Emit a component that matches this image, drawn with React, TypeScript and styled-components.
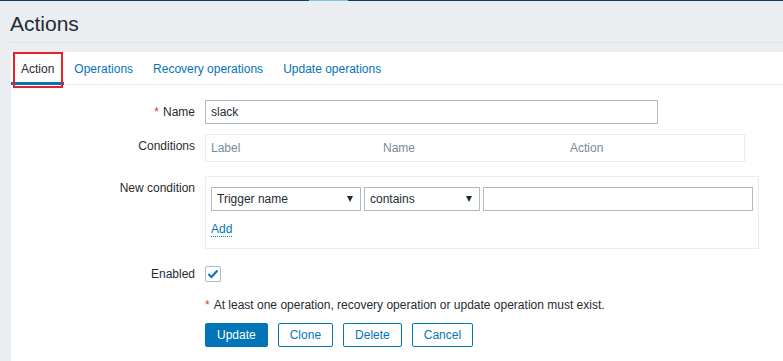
import React from 'react';
import styled, { createGlobalStyle } from 'styled-components';

const GlobalStyle = createGlobalStyle`
  html, body, #root {
    height: 100%;
  }

  body {
    margin: 0;
    background: #ebeef1;
    color: #1f2c33;
    font-family: "Liberation Sans", Arial, sans-serif;
    font-size: 12px;
    overflow: hidden;
  }
`;

const Page = styled.div`
  display: flex;
  flex-direction: column;
  height: 100%;
`;

const TopStrip = styled.div`
  display: flex;
  height: 1px;
  background: #0b4166;
`;

const TopStripMark = styled.div`
  width: 39px;
  margin-left: 309px;
  background: #7ec3ee;
`;

const Header = styled.header`
  margin: 11px 0 9px 10px;
  padding-bottom: 6px;
  border-bottom: 1px solid #dde3e7;
`;

const Title = styled.h1`
  margin: 0;
  font-size: 21px;
  font-weight: normal;
  line-height: 24px;
  color: #1f2c33;
`;

const Content = styled.main`
  flex: 1;
  margin-left: 11px;
  background: #ffffff;
`;

const TabList = styled.ul`
  display: flex;
  margin: 0;
  padding: 0;
  list-style: none;
  border-bottom: 1px solid #ebeef1;
`;

const Tab = styled.li<{ $active?: boolean }>`
  position: relative;
  padding: 10px 10px 6px;
  margin-bottom: -1px;
  line-height: 14px;
  color: ${(p) => (p.$active ? '#1f2c33' : '#0275b8')};
  border-bottom: 3px solid ${(p) => (p.$active ? '#0275b8' : 'transparent')};
  cursor: pointer;
`;

// red annotation frame drawn over the first tab
const Highlight = styled.span`
  position: absolute;
  left: 2px;
  top: 0;
  width: 46px;
  height: 32px;
  border: 2px solid #e8202a;
  pointer-events: none;
`;

const Form = styled.div`
  display: grid;
  grid-template-columns: 184px 1fr;
  column-gap: 10px;
  padding-top: 15px;
`;

const Label = styled.div<{ $top?: number }>`
  margin-top: ${(p) => p.$top ?? 0}px;
  text-align: right;
  line-height: 24px;
  color: #1f2c33;
`;

const Field = styled.div<{ $top?: number }>`
  margin-top: ${(p) => p.$top ?? 0}px;
  display: flex;
  align-items: flex-start;
`;

const Required = styled.span`
  color: #e33734;
  margin-right: 4px;
`;

const TextBox = styled.input<{ $width: number }>`
  box-sizing: border-box;
  width: ${(p) => p.$width}px;
  height: 24px;
  margin: 0;
  padding: 0 5px;
  border: 1px solid #acbbc5;
  border-radius: 0;
  font: inherit;
  color: #1f2c33;
  outline: none;
`;

const CondTable = styled.div`
  box-sizing: border-box;
  width: 540px;
  display: grid;
  grid-template-columns: 172px 187px 1fr;
  border: 1px solid #ebeef1;
`;

const HeadCell = styled.div`
  padding: 6px 5px;
  line-height: 14px;
  color: #768d99;
`;

const CondBox = styled.div`
  box-sizing: border-box;
  width: 554px;
  padding: 10px 5px 11px;
  border: 1px solid #ebeef1;
`;

const CondRow = styled.div`
  display: flex;
  gap: 3px;
`;

const Select = styled.div<{ $width: number }>`
  box-sizing: border-box;
  width: ${(p) => p.$width}px;
  height: 24px;
  display: flex;
  align-items: center;
  justify-content: space-between;
  padding: 0 7px 0 5px;
  border: 1px solid #acbbc5;
  color: #1f2c33;
`;

const Arrow = styled.span`
  width: 0;
  height: 0;
  border-left: 3.5px solid transparent;
  border-right: 3.5px solid transparent;
  border-top: 6px solid #1f2c33;
`;

const AddLink = styled.a`
  display: inline-block;
  margin-top: 11px;
  line-height: 14px;
  color: #0275b8;
  text-decoration: none;
  border-bottom: 1px dotted #0275b8;
  cursor: pointer;
`;

const CheckBox = styled.span`
  box-sizing: border-box;
  width: 16px;
  height: 16px;
  margin-top: 4px;
  display: flex;
  align-items: center;
  justify-content: center;
  border: 1px solid #acbbc5;
  border-radius: 2px;
`;

const Note = styled.div`
  line-height: 14px;
  color: #1f2c33;
`;

const ButtonRow = styled.div`
  display: flex;
  gap: 10px;
`;

const Button = styled.button<{ $primary?: boolean }>`
  height: 24px;
  margin: 0;
  padding: 0 11px;
  border: 1px solid #0275b8;
  border-radius: 2px;
  background: ${(p) => (p.$primary ? '#0275b8' : '#ffffff')};
  color: ${(p) => (p.$primary ? '#ffffff' : '#0275b8')};
  font: inherit;
  line-height: 22px;
  cursor: pointer;
`;

const tabs = ['Action', 'Operations', 'Recovery operations', 'Update operations'];

export default function App() {
  return (
    <Page>
      <GlobalStyle />
      <TopStrip>
        <TopStripMark />
      </TopStrip>
      <Header>
        <Title>Actions</Title>
      </Header>
      <Content>
        <TabList>
          {tabs.map((t, i) => (
            <Tab key={t} $active={i === 0}>
              {t}
              {i === 0 && <Highlight />}
            </Tab>
          ))}
        </TabList>

        <Form>
          <Label>
            <Required>*</Required>Name
          </Label>
          <Field>
            <TextBox $width={453} defaultValue="slack" />
          </Field>

          <Label $top={10}>Conditions</Label>
          <Field $top={10}>
            <CondTable>
              <HeadCell>Label</HeadCell>
              <HeadCell>Name</HeadCell>
              <HeadCell>Action</HeadCell>
            </CondTable>
          </Field>

          <Label $top={14}>New condition</Label>
          <Field $top={14}>
            <CondBox>
              <CondRow>
                <Select $width={150}>
                  Trigger name
                  <Arrow />
                </Select>
                <Select $width={116}>
                  contains
                  <Arrow />
                </Select>
                <TextBox $width={270} />
              </CondRow>
              <AddLink>Add</AddLink>
            </CondBox>
          </Field>

          <Label $top={13}>Enabled</Label>
          <Field $top={13}>
            <CheckBox>
              <svg width="12" height="10" viewBox="0 0 12 10">
                <path d="M1.5 5 L4.5 8 L10.5 1.5" fill="none" stroke="#0275b8" strokeWidth="2" />
              </svg>
            </CheckBox>
          </Field>

          <div />
          <Field $top={12}>
            <Note>
              <Required>*</Required>At least one operation, recovery operation or update operation must exist.
            </Note>
          </Field>

          <div />
          <Field $top={11}>
            <ButtonRow>
              <Button $primary>Update</Button>
              <Button>Clone</Button>
              <Button>Delete</Button>
              <Button>Cancel</Button>
            </ButtonRow>
          </Field>
        </Form>
      </Content>
    </Page>
  );
}
